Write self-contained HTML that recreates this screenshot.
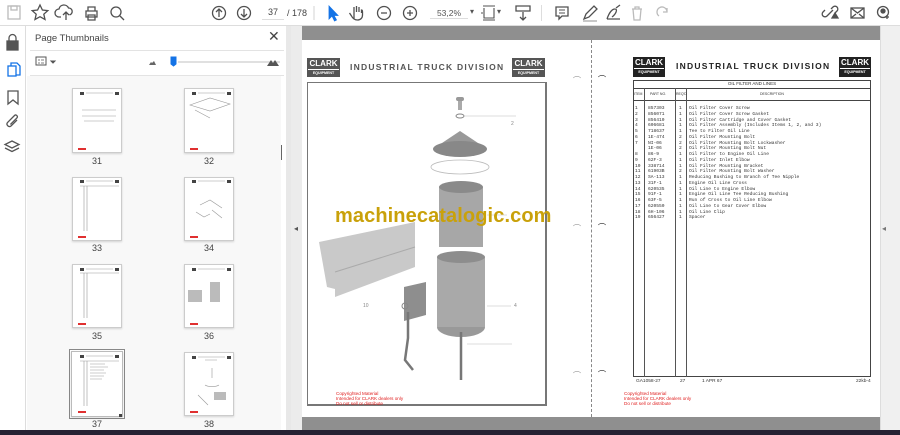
<!DOCTYPE html>
<html><head><meta charset="utf-8"><style>
*{margin:0;padding:0;box-sizing:border-box}
body{width:900px;height:435px;overflow:hidden;background:#fff;font-family:"Liberation Sans",sans-serif;position:relative}
.a{position:absolute}
.th{position:absolute;background:#fff;border:1px solid #ccc;box-shadow:0 1px 2px rgba(0,0,0,.15)}
.lab{position:absolute;font-size:9px;color:#444;width:40px;text-align:center}
.logo{position:absolute;background:#222;color:#fff;font-weight:bold;font-size:8px;text-align:center;line-height:10px;letter-spacing:0;overflow:hidden;padding-top:1px}
.logo i{display:block;font-style:normal;font-size:3.6px;line-height:6px;border-top:1px solid #fff;margin:0 1px}
.ttl{position:absolute;font-weight:bold;font-size:8.5px;letter-spacing:1.25px;color:#333;white-space:nowrap}
.rows{position:absolute;font-family:"Liberation Mono",monospace;font-size:4.6px;line-height:5.75px;color:#333;white-space:pre}
.red{position:absolute;color:#e02020;font-size:4.6px;line-height:5.2px}
</style></head><body>
<div class="a" style="left:0;top:0;width:900px;height:26px;background:#fff;border-bottom:1px solid #ddd"></div>
<svg class="a" style="left:0;top:0" width="900" height="26" fill="none" stroke="#505050" stroke-width="1.3">
<g stroke="#bbb"><rect x="8" y="6" width="12" height="13"/><rect x="11" y="6" width="6" height="4"/></g>
<path d="M40 5l2.4 5 5.4.6-4 3.6 1.2 5.3-5-2.8-5 2.8 1.2-5.3-4-3.6 5.4-.6z"/>
<path d="M61 17h-2a4 4 0 0 1 0-8 5 5 0 0 1 9.5-1 3.5 3.5 0 0 1 1 6.9M66 20v-8m-3 3l3-3 3 3"/>
<path d="M86 11h11v6h-11zM88 11V7h7v4M88 15h7v5h-7z"/>
<circle cx="116" cy="12" r="5"/><path d="M120 16l4 4"/>
<circle cx="219" cy="13" r="6.5"/><path d="M219 17V9m-3 3l3-3 3 3"/>
<circle cx="244" cy="13" r="6.5"/><path d="M244 9v8m-3-3l3 3 3-3"/>
<path d="M314 6v14" stroke="#ddd"/>
<path d="M329 6v13l3-3 2.5 5 2-1-2.5-4.5h4z" fill="#1473e6" stroke="#1473e6" stroke-width=".8"/>
<path d="M354 19v-7m0 0V7m2.5 5V6m2.5 6V7m2.5 6v-3c1 0 1 1 1 2v3c0 3-2 5-5 5s-5-2-6-4l-2-3"/>
<circle cx="384" cy="13" r="6.5"/><path d="M381 13h6"/>
<circle cx="410" cy="13" r="6.5"/><path d="M407 13h6m-3-3v6"/>
<path d="M483 6h12M483 20h12M484 8v10h10V8M481 13h2" stroke-width="1.1"/>
<path d="M516 6h14v5h-14zM523 12v8m-3-3l3 3 3-3"/>
<path d="M556 7h12v9h-6l-3 3v-3h-3z"/><path d="M559 10h6M559 13h6" stroke-width=".9"/>
<path d="M584 19l2-5 8-8 3 3-8 8z"/><path d="M583 21h14" stroke="#aaa"/>
<path d="M607 19c2-6 5-10 8-10s1 5-3 8M607 19h13"/><path d="M616 8l4-3"/>
<path d="M632 9h10M635 9V7h4v2M633 9l1 11h6l1-11" stroke="#bbb"/>
<path d="M659 16a5 5 0 1 1 8-4M667 8v4h-4" stroke="#bbb"/>
<path d="M829 14l-2 2a2.5 2.5 0 0 1-4-4l2-2M831 9l2-2a2.5 2.5 0 0 1 4 4l-2 2M828 15l5-5"/><path d="M832 18l3-5 3 5z" fill="#505050"/>
<rect x="851" y="8" width="13" height="10"/><path d="M851 8l6.5 5 6.5-5M851 18l5-4M864 18l-5-4"/>
<circle cx="883" cy="12" r="5.5"/><circle cx="883" cy="11" r="2" fill="#505050"/><path d="M887 15v4m-2-2h4"/>
</svg>
<div class="a" style="left:262px;top:7px;width:22px;height:13px;border-bottom:1px solid #ddd;font-size:9px;color:#444;text-align:center">37</div>
<div class="a" style="left:287px;top:8px;font-size:9px;color:#444">/ 178</div>
<div class="a" style="left:430px;top:8px;width:38px;border-bottom:1px solid #ddd;font-size:8.5px;color:#555;text-align:center">53,2%</div>
<div class="a" style="left:470px;top:7px;font-size:8px;color:#555">▾</div>
<div class="a" style="left:497px;top:7px;font-size:8px;color:#555">▾</div>
<div class="a" style="left:541px;top:5px;width:1px;height:16px;background:#ddd"></div>
<div class="a" style="left:0;top:26px;width:26px;height:409px;background:#fff;border-right:1px solid #ddd"></div>
<svg class="a" style="left:0;top:26px" width="26" height="140" fill="none" stroke="#555" stroke-width="1.3">
<rect x="7" y="15" width="11" height="9" fill="#555"/><path d="M9 15v-3a3.5 3.5 0 0 1 7 0v3"/>
<g stroke="#1473e6"><rect x="8" y="40" width="8" height="10"/><path d="M11 40v-3h6l3 3v9h-4"/></g>
<path d="M8 65h10v13l-5-4-5 4z"/>
<path d="M17 94l-6 6a2.5 2.5 0 0 1-3.5-3.5l7-7a1.7 1.7 0 0 1 2.4 2.4l-6.5 6.5"/>
<path d="M12 115l7 3.5-7 3.5-7-3.5zM5 122l7 3.5 7-3.5"/>
</svg>
<div class="a" style="left:27px;top:26px;width:261px;height:409px;background:#fff"></div>
<div class="a" style="left:35px;top:33px;font-size:9.5px;color:#444">Page Thumbnails</div>
<div class="a" style="left:268px;top:28px;font-size:14px;color:#444">✕</div>
<div class="a" style="left:30px;top:50px;width:254px;height:1px;background:#e3e3e3"></div>
<div class="a" style="left:30px;top:75px;width:254px;height:1px;background:#e3e3e3"></div>
<svg class="a" style="left:30px;top:52px" width="256" height="22" fill="none" stroke="#555">
<rect x="6" y="5" width="10" height="8"/><path d="M8 8h2M8 11h2M11 8h3M11 11h3" stroke-width=".8"/>
<path d="M21 9l2 2 2-2z" fill="#555"/>
<path d="M119 13l2-3 1 1 2-2 2 4z" fill="#666" stroke="none"/>
<path d="M148 10h102" stroke="#e0e0e0" stroke-width="2"/>
<path d="M141 5h5v7l-2.5 2-2.5-2z" fill="#1473e6" stroke="#1473e6"/>
<path d="M237 14l4-6 2 3 2-3 4 6z" fill="#555" stroke="none"/>
</svg>
<div class="a" style="left:27px;top:76px;width:254px;height:359px;background:#f8f8f8"></div>
<div class="a" style="left:281px;top:145px;width:1px;height:15px;background:#666"></div>
<div class="a" style="left:286px;top:26px;width:5px;height:409px;background:#e8e8e8"></div>
<div class="th" style="left:72px;top:88px;width:50px;height:65px"></div>
<div class="th" style="left:184px;top:88px;width:50px;height:65px"></div>
<div class="th" style="left:72px;top:177px;width:50px;height:64px"></div>
<div class="th" style="left:184px;top:177px;width:50px;height:64px"></div>
<div class="th" style="left:72px;top:264px;width:50px;height:64px"></div>
<div class="th" style="left:184px;top:264px;width:50px;height:64px"></div>
<div class="a" style="left:69px;top:349px;width:56px;height:70px;border:1px solid #888;background:#fff"></div>
<div class="th" style="left:71px;top:351px;width:52px;height:66px;border-color:#bbb"></div>
<div class="th" style="left:184px;top:352px;width:50px;height:64px"></div>
<svg class="a" style="left:0;top:0" width="290" height="435">
<g fill="#444"><rect x="80" y="92" width="4" height="3"/><rect x="115" y="92" width="4" height="3"/><rect x="192" y="92" width="4" height="3"/><rect x="227" y="92" width="4" height="3"/>
<rect x="80" y="180" width="4" height="3"/><rect x="115" y="180" width="4" height="3"/><rect x="192" y="180" width="4" height="3"/><rect x="227" y="180" width="4" height="3"/>
<rect x="80" y="268" width="4" height="3"/><rect x="115" y="268" width="4" height="3"/><rect x="192" y="268" width="4" height="3"/><rect x="227" y="268" width="4" height="3"/>
<rect x="80" y="355" width="4" height="3"/><rect x="115" y="355" width="4" height="3"/><rect x="192" y="356" width="4" height="3"/><rect x="227" y="356" width="4" height="3"/>
<rect x="119" y="414" width="3" height="3"/></g>
<g stroke="#999" stroke-width=".6" fill="none"><path d="M86 93h27M198 93h27M86 181h27M198 181h27M86 269h27M198 269h27M86 356h27M198 357h27"/>
<path d="M82 110h34M82 116h34M84 121h30"/>
<path d="M80 186h39M84 186v45M87 186v45M80 273h39M84 273v45M87 273v45M80 361h39M84 361v45M87 361v45M90 364h15M90 367h18M90 370h14M90 373h16M90 376h14M90 379h12"/>
<path d="M190 105l20-7 20 6-20 7zM195 110l15 8"/>
<path d="M200 205l10-5 12 8M196 212l8 5 6-3M212 210l10 8"/>
<path d="M205 360h12M212 368v10M205 385a8 3 0 0 0 14 0M198 395l10 10"/></g>
<g fill="#bbb"><rect x="188" y="290" width="14" height="12"/><rect x="210" y="282" width="10" height="20"/><rect x="214" y="392" width="12" height="8"/></g>
<g fill="#e03030"><rect x="78" y="148" width="8" height="2"/><rect x="190" y="148" width="8" height="2"/><rect x="78" y="236" width="8" height="2"/><rect x="190" y="236" width="8" height="2"/><rect x="78" y="323" width="8" height="2"/><rect x="190" y="323" width="8" height="2"/><rect x="78" y="411" width="8" height="2"/><rect x="190" y="411" width="8" height="2"/></g>
</svg>
<div class="lab" style="left:77px;top:156px">31</div><div class="lab" style="left:189px;top:156px">32</div>
<div class="lab" style="left:77px;top:243px">33</div><div class="lab" style="left:189px;top:243px">34</div>
<div class="lab" style="left:77px;top:331px">35</div><div class="lab" style="left:189px;top:331px">36</div>
<div class="lab" style="left:77px;top:419px">37</div><div class="lab" style="left:189px;top:419px">38</div>
<div class="a" style="left:291px;top:26px;width:589px;height:409px;background:#ececec"></div>
<div class="a" style="left:294px;top:224px;font-size:8px;color:#555">◂</div>
<div class="a" style="left:302px;top:26px;width:578px;height:14px;background:#8f8f8f"></div>
<div class="a" style="left:302px;top:40px;width:578px;height:377px;background:#fff"></div>
<div class="a" style="left:302px;top:417px;width:578px;height:13px;background:#8f8f8f"></div>
<div class="a" style="left:880px;top:26px;width:20px;height:409px;background:#f0f0f0;border-left:1px solid #ddd"></div>
<div class="a" style="left:882px;top:224px;font-size:8px;color:#777">◂</div>
<div class="a" style="left:0;top:430px;width:900px;height:5px;background:#262233"></div>
<div class="logo" style="left:307px;top:58px;width:33px;height:19px;background:#555">CLARK<i>EQUIPMENT</i></div>
<div class="ttl" style="left:350px;top:62px;color:#555">INDUSTRIAL TRUCK DIVISION</div>
<div class="logo" style="left:512px;top:58px;width:33px;height:19px;background:#555">CLARK<i>EQUIPMENT</i></div>
<div class="a" style="left:307px;top:82px;width:240px;height:324px;border:1px solid #777;border-width:1px 2px 2px 1px"></div>
<svg class="a" style="left:307px;top:82px" width="240" height="324">
<rect x="149" y="15" width="8" height="4" rx="2" fill="#999"/><rect x="151" y="19" width="4" height="9" fill="#aaa"/>
<ellipse cx="153" cy="34" rx="4" ry="2" fill="none" stroke="#888"/><path d="M157 34h52" stroke="#bbb" stroke-width=".6"/>
<path d="M126 67l27-18 27 18z" fill="#999"/><ellipse cx="153" cy="67" rx="27" ry="8" fill="#888"/>
<ellipse cx="153" cy="85" rx="29" ry="7" fill="none" stroke="#bbb" stroke-width=".8"/>
<rect x="132" y="105" width="44" height="60" fill="#a7a7a7"/><ellipse cx="154" cy="105" rx="22" ry="6" fill="#8a8a8a"/>
<path d="M12 160l96-20v45l-80 30v-8l-8-2z" fill="#c9c9c9"/><path d="M28 190l80-25" stroke="#aaa"/>
<rect x="130" y="175" width="48" height="70" fill="#a9a9a9"/><ellipse cx="154" cy="175" rx="24" ry="6" fill="#8d8d8d"/><path d="M130 245a24 10 0 0 0 48 0" fill="#999"/>
<path d="M97 205l22-5v33l-22 6z" fill="#8e8e8e"/>
<path d="M101 230v26l-3 22 8 10M154 250v48" stroke="#777" stroke-width="2.5" fill="none"/>
<circle cx="98" cy="224" r="3" fill="none" stroke="#888"/>
<path d="M180 133h20M180 224h24M160 262h45" stroke="#bbb" stroke-width=".6"/>
<text font-size="5" fill="#888" font-family="Liberation Sans" x="204" y="43">2</text><text font-size="5" fill="#888" font-family="Liberation Sans" x="207" y="225">4</text><text font-size="5" fill="#888" font-family="Liberation Sans" x="56" y="225">10</text>
</svg>
<div class="a" style="left:335px;top:205px;font-size:20px;font-weight:bold;color:#c9a10a;letter-spacing:.1px">machinecatalogic.com</div>
<div class="red" style="left:336px;top:391px">Copyrighted Material<br>Intended for CLARK dealers only<br>Do not sell or distribute</div>
<div class="a" style="left:591px;top:40px;height:377px;border-left:1px dashed #888"></div>
<div class="a" style="left:573px;top:75px;font-size:8px;color:#999">⌒</div><div class="a" style="left:598px;top:74px;font-size:8px;color:#222">⌒</div>
<div class="a" style="left:573px;top:223px;font-size:8px;color:#999">⌒</div><div class="a" style="left:598px;top:222px;font-size:8px;color:#222">⌒</div>
<div class="a" style="left:573px;top:370px;font-size:8px;color:#999">⌒</div><div class="a" style="left:598px;top:369px;font-size:8px;color:#222">⌒</div>
<div class="logo" style="left:633px;top:57px;width:32px;height:20px">CLARK<i>EQUIPMENT</i></div>
<div class="ttl" style="left:676px;top:61px;color:#222">INDUSTRIAL TRUCK DIVISION</div>
<div class="logo" style="left:839px;top:57px;width:32px;height:20px">CLARK<i>EQUIPMENT</i></div>
<div class="a" style="left:633px;top:80px;width:238px;height:297px;border:1px solid #444"></div>
<div class="a" style="left:633px;top:88px;width:238px;height:1px;background:#444"></div>
<div class="a" style="left:633px;top:100px;width:238px;height:1px;background:#444"></div>
<div class="a" style="left:644px;top:88px;width:1px;height:289px;background:#555"></div>
<div class="a" style="left:675px;top:88px;width:1px;height:289px;background:#555"></div>
<div class="a" style="left:686px;top:88px;width:1px;height:289px;background:#555"></div>
<div class="a" style="left:633px;top:81px;width:238px;text-align:center;font-size:4.5px;color:#333">OIL FILTER AND LINES</div>
<div class="a" style="left:634px;top:92px;font-size:3.5px;color:#333">ITEM</div>
<div class="a" style="left:650px;top:92px;font-size:3.5px;color:#333">PART NO.</div>
<div class="a" style="left:676px;top:92px;font-size:3.5px;color:#333">REQ'D</div>
<div class="a" style="left:760px;top:92px;font-size:3.5px;color:#333">DESCRIPTION</div>
<div class="rows" style="left:635px;top:106px">1
2
3
4
5
6
7

8
9
10
11
12
13
14
15
16
17
18
19</div>
<div class="rows" style="left:648px;top:106px">857303
856071
856410
606681
718637
1E-474
NI-06
1E-06
86-9
62F-3
338714
61903B
SA-113
31F-1
620535
91F-1
63F-5
620550
6H-106
656427</div>
<div class="rows" style="left:679px;top:106px">1
1
1
1
1
2
2
2
1
1
1
2
1
1
1
1
1
1
1
1</div>
<div class="rows" style="left:689px;top:106px">Oil Filter Cover Screw
Oil Filter Cover Screw Gasket
Oil Filter Cartridge and Cover Gasket
Oil Filter Assembly (Includes Items 1, 2, and 3)
Tee to Filter Oil Line
Oil Filter Mounting Bolt
Oil Filter Mounting Bolt Lockwasher
Oil Filter Mounting Bolt Nut
Oil Filter to Engine Oil Line
Oil Filter Inlet Elbow
Oil Filter Mounting Bracket
Oil Filter Mounting Bolt Washer
Reducing Bushing to Branch of Tee Nipple
Engine Oil Line Cross
Oil Line to Engine Elbow
Engine Oil Line Tee Reducing Bushing
Run of Cross to Oil Line Elbow
Oil Line to Gear Cover Elbow
Oil Line Clip
Spacer</div>
<div class="a" style="left:636px;top:379px;font-size:4.8px;color:#333">GA1058-27</div>
<div class="a" style="left:680px;top:379px;font-size:4.8px;color:#333">27</div>
<div class="a" style="left:702px;top:379px;font-size:4.8px;color:#333">1 APR 67</div>
<div class="a" style="left:856px;top:379px;font-size:4.8px;color:#333">22kb-4</div>
<div class="red" style="left:624px;top:391px">Copyrighted Material<br>Intended for CLARK dealers only<br>Do not sell or distribute</div>
</body></html>
